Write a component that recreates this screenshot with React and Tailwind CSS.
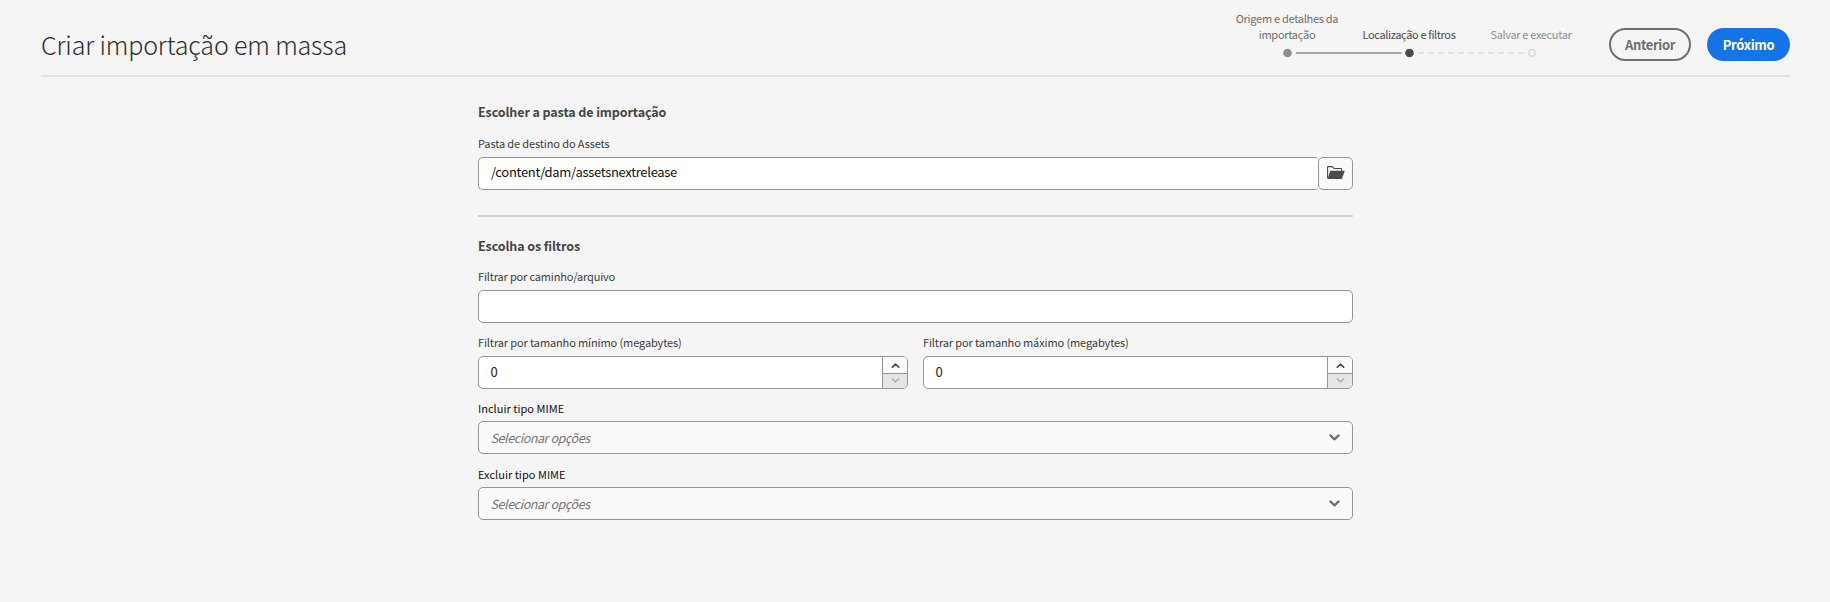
import React from "react";

const label = "block h-5 whitespace-nowrap text-[11px] leading-5";
const heading = "h-5 whitespace-nowrap text-[12.5px] font-bold leading-5 tracking-[-0.1px] text-[#444444]";
const field = "h-[33px] rounded-[5px] border border-[#959595] bg-white";

function Chevron({ up = false, className }) {
  return (
    <svg viewBox="0 0 10 6" className={className} fill="none" stroke="currentColor" strokeWidth="2" strokeLinecap="round" strokeLinejoin="round">
      <path d={up ? "M1.2 4.9 L5 1.3 L8.8 4.9" : "M1.2 1.1 L5 4.7 L8.8 1.1"} />
    </svg>
  );
}

function NumberField({ title, tracking }) {
  return (
    <div className="w-[430px]">
      <label className={`${label} ${tracking} text-[#3c3c3c]`}>{title}</label>
      <div className={`mt-1 flex overflow-hidden ${field}`}>
        <div className="flex-1 pl-[11.5px] text-[13px] leading-[29px] text-[#222222]">0</div>
        <div className="flex w-[25px] flex-col border-l border-[#959595]">
          <div className="flex h-[17px] items-center justify-center border-b border-[#959595] bg-[#fafafa] pt-px text-[#4b4b4b]">
            <Chevron up className="h-[5px] w-[9px]" />
          </div>
          <div className="flex flex-1 items-center justify-center bg-[#e6e6e6] pb-0.5 text-[#b3b3b3]">
            <Chevron className="h-[5px] w-[9px]" />
          </div>
        </div>
      </div>
    </div>
  );
}

function SelectField({ title }) {
  return (
    <div>
      <label className={`${label} tracking-[0.02px] text-[#111111]`}>{title}</label>
      <div className="mt-[3px] flex h-[33px] items-center justify-between rounded-[5px] border border-[#959595] bg-[#fafafa] pr-3 pl-[11.5px]">
        <span className="text-[12.5px] leading-5 tracking-[-0.42px] text-[#747474] italic">Selecionar opções</span>
        <Chevron className="h-[7px] w-[11px] text-[#6e6e6e]" />
      </div>
    </div>
  );
}

function StepTrack() {
  return (
    <svg className="mt-[5px] block h-3 w-[366px]" viewBox="0 0 366 12" fill="none">
      <circle cx="61.5" cy="6" r="4.3" fill="#8e8e8e" />
      <path d="M70 6 H175.5" stroke="#a6a6a6" strokeWidth="2" />
      <circle cx="183.5" cy="6" r="4.3" fill="#4b4b4b" />
      <path d="M192 6 H298" stroke="#e1e1e1" strokeWidth="2" strokeDasharray="6 4" />
      <circle cx="306" cy="6" r="3.3" stroke="#dedede" strokeWidth="2" />
    </svg>
  );
}

function FolderOpen() {
  return (
    <svg className="h-[13px] w-[18px]" viewBox="0 0 18 13">
      <path d="M0.6 12.2 V1.2 Q0.6 0.6 1.2 0.6 H5.4 L7.1 2.5 H14 Q14.6 2.5 14.6 3.1 V5" fill="none" stroke="#4b4b4b" strokeWidth="1.1" />
      <path d="M3.6 4.8 H17.2 Q17.8 4.8 17.6 5.4 L15 12.4 Q14.8 13 14.2 13 H0.6 L3 5.2 Q3.2 4.8 3.6 4.8 Z" fill="#4b4b4b" />
    </svg>
  );
}

export default function App() {
  return (
    <div className="min-h-[602px] w-[1830px] bg-[#f5f5f5] font-['Noto_Sans_CJK_JP','Noto_Sans',sans-serif]">
      <header className="ml-[41px] flex h-[77px] w-[1749px] border-b-2 border-[#e1e1e1]">
        <h1 className="mt-[25px] flex-1 text-[25px] leading-[38px] font-light tracking-[-0.14px] text-[#2c2c2c]">Criar importação em massa</h1>
        <div className="mt-[10px] w-[366px]">
          <div className="flex items-end text-center text-[11px] leading-4">
            <div className="w-[122px] tracking-[-0.28px] text-[#6e6e6e]">
              Origem e detalhes da
              <br />
              importação
            </div>
            <div className="w-[122px] tracking-[-0.37px] text-[#4b4b4b]">Localização e filtros</div>
            <div className="w-[122px] tracking-[-0.34px] text-[#8e8e8e]">Salvar e executar</div>
          </div>
          <StepTrack />
        </div>
        <button className="mt-7 ml-[17px] h-[33px] w-[82px] rounded-full border-2 border-[#6e6e6e] text-center text-[13px] leading-[28px] font-bold tracking-[-0.34px] text-[#6e6e6e]">Anterior</button>
        <button className="mt-7 ml-4 h-[33px] w-[83px] rounded-full bg-[#1473e6] text-center text-[13px] leading-[32px] font-bold tracking-[-0.34px] text-white">Próximo</button>
      </header>
      <main className="ml-[478px] w-[875px] pt-[25px]">
        <section>
          <h2 className={heading}>Escolher a pasta de importação</h2>
          <label className={`${label} mt-[11px] tracking-[-0.12px] text-[#3c3c3c]`}>Pasta de destino do Assets</label>
          <div className="mt-1 flex">
            <div className="h-[33px] flex-1 rounded-l-[5px] rounded-r-[3px] border border-r-0 border-[#959595] bg-white pl-3 text-[13px] leading-[28px] tracking-[-0.31px] text-[#111111]">
              /content/dam/assetsnextrelease
            </div>
            <button className="flex h-[33px] w-[35px] items-center justify-center rounded-[5px] border border-[#959595] bg-[#fafafa] pb-0.5">
              <FolderOpen />
            </button>
          </div>
        </section>
        <hr className="mt-[25px] h-0.5 border-0 bg-[#d3d3d3]" />
        <section className="pt-[19px]">
          <h2 className={heading}>Escolha os filtros</h2>
          <label className={`${label} mt-[10px] tracking-[-0.17px] text-[#3c3c3c]`}>Filtrar por caminho/arquivo</label>
          <div className={`mt-1 ${field}`} />
          <div className="mt-[9px] flex gap-[15px]">
            <NumberField title="Filtrar por tamanho mínimo (megabytes)" tracking="tracking-[-0.12px]" />
            <NumberField title="Filtrar por tamanho máximo (megabytes)" tracking="tracking-[-0.12px]" />
          </div>
          <div className="mt-[9px] flex flex-col gap-[10px]">
            <SelectField title="Incluir tipo MIME" />
            <SelectField title="Excluir tipo MIME" />
          </div>
        </section>
      </main>
    </div>
  );
}
